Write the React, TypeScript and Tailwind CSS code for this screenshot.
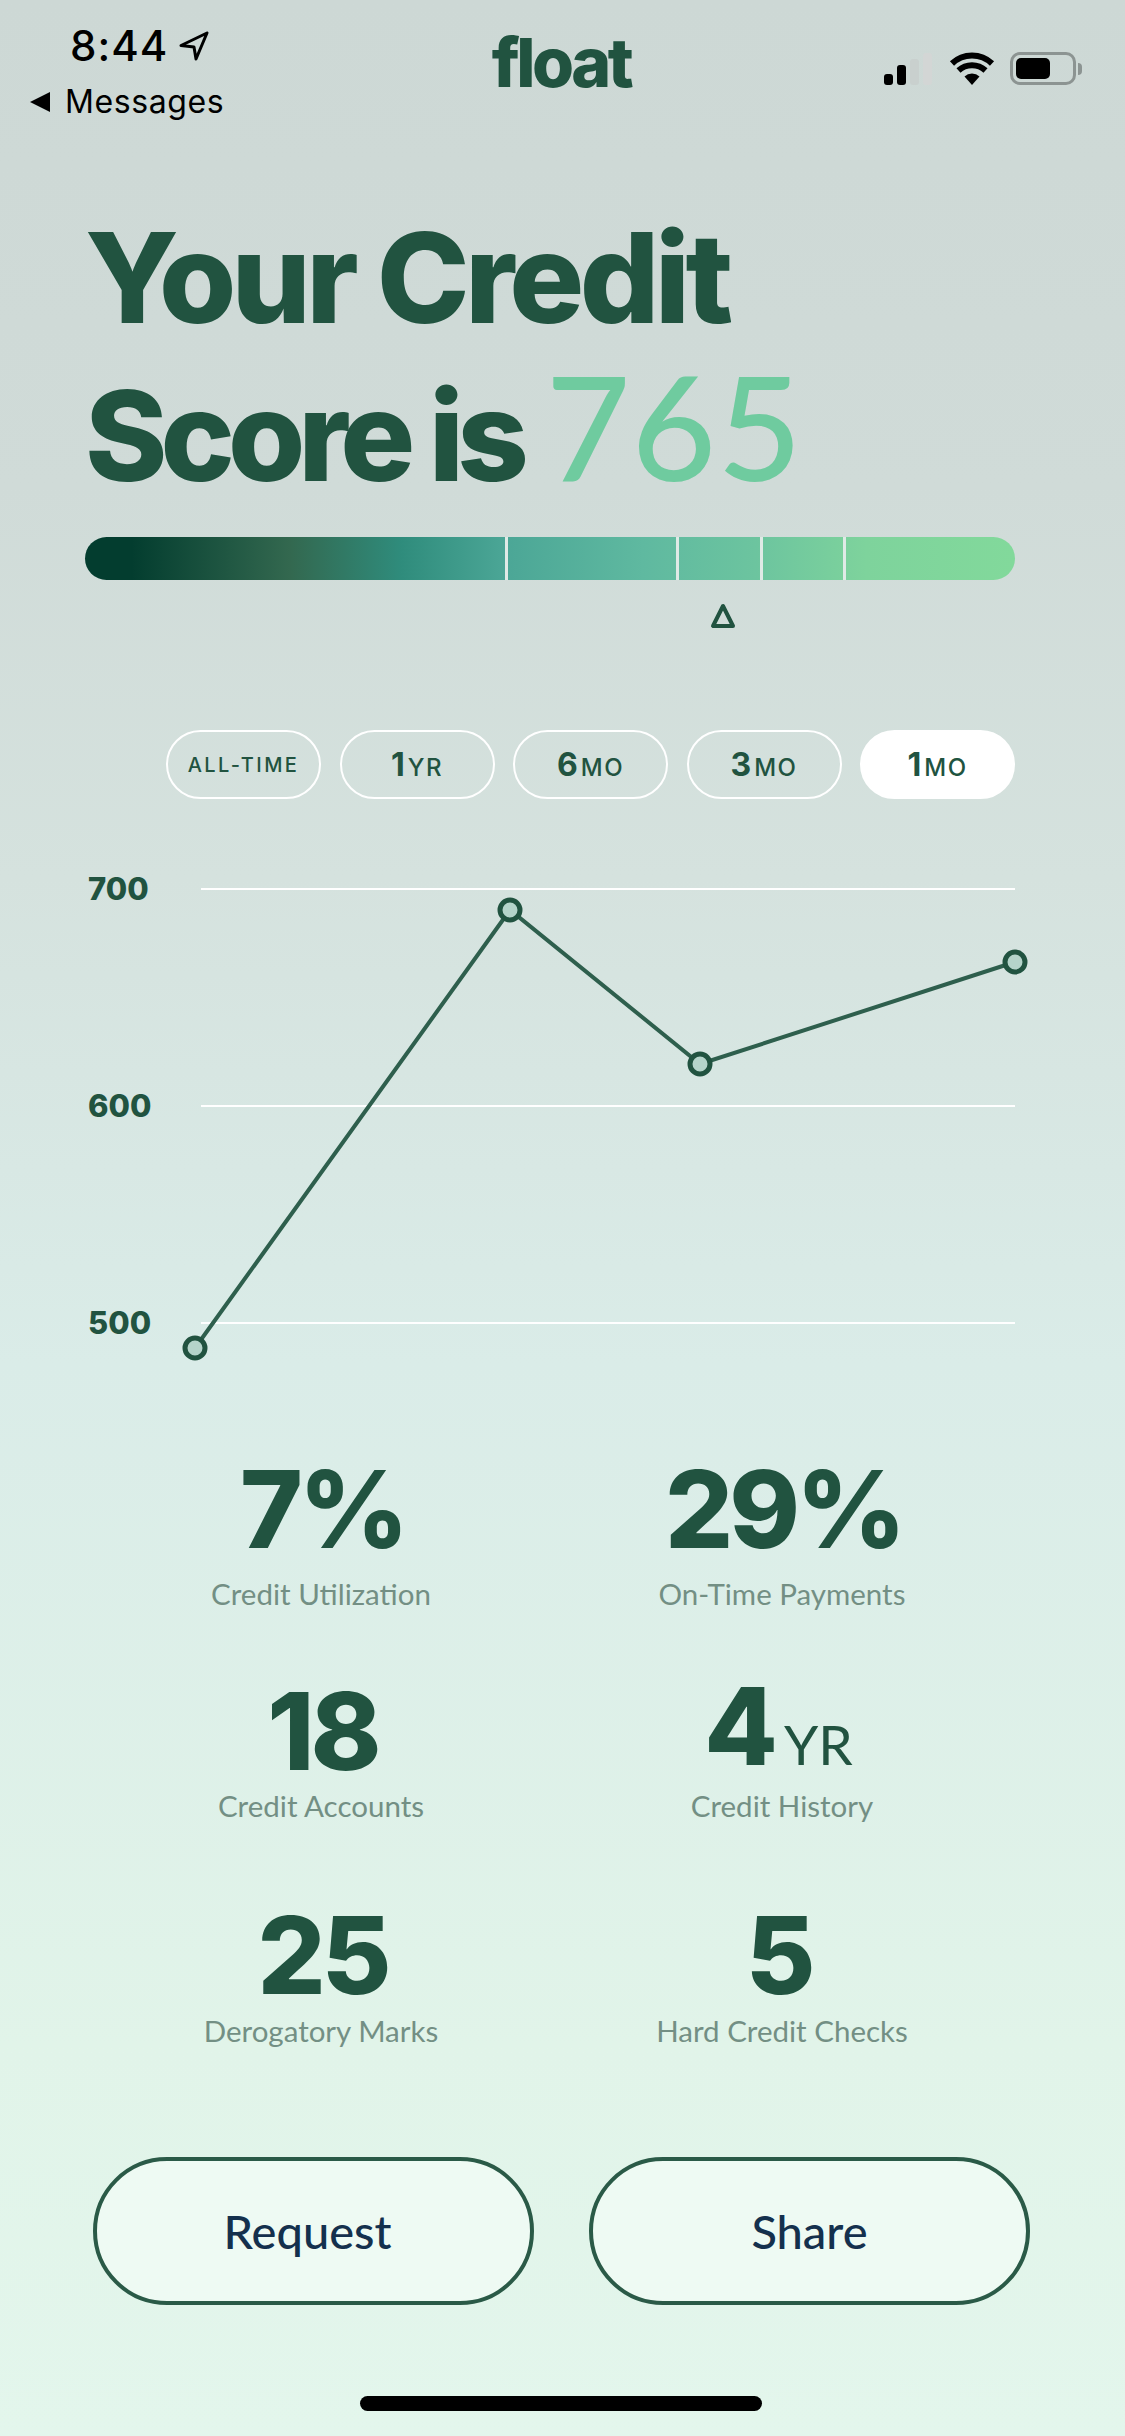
const pills = [
  { big: '', small: 'ALL-TIME' },
  { big: '1', small: 'YR' },
  { big: '6', small: 'MO' },
  { big: '3', small: 'MO' },
  { big: '1', small: 'MO', active: true },
]

// the rows in the picture are not evenly spaced, so each stat keeps its own nudges
const stats = [
  { value: '7%', label: 'Credit Utilization', numberClass: 'mt-0', labelClass: 'mt-[15px]' },
  { value: '29%', label: 'On-Time Payments', numberClass: 'mt-0', labelClass: 'mt-[15px]' },
  { value: '18', label: 'Credit Accounts', numberClass: 'mt-0', labelClass: 'mt-[5px]' },
  { value: '4', unit: 'YR', label: 'Credit History', numberClass: 'mt-[-5px] pr-[10px]', labelClass: 'mt-[10px]' },
  { value: '25', label: 'Derogatory Marks', numberClass: 'mt-[2px]', labelClass: 'mt-[6px]' },
  { value: '5', label: 'Hard Credit Checks', numberClass: 'mt-[2px] pr-[10px]', labelClass: 'mt-[6px]' },
]

const points = [
  [110, 479],
  [425, 41],
  [615, 195],
  [930, 93],
]

function StatusBar() {
  return (
    <header className="grid grid-cols-3 h-[200px] font-['Inter',sans-serif] text-black">
      <div className="pl-[29px] pt-[20px]">
        <div className="flex items-center h-[52px] pl-[41px] gap-[10px]">
          <span className="text-[42px] leading-none font-medium tracking-[1px]">8:44</span>
          <svg width="32" height="32" viewBox="0 0 32 32" fill="none" stroke="#000" strokeWidth="3" strokeLinejoin="round">
            <path d="M29 3 3 15.5l13 1.5 2 12z" />
          </svg>
        </div>
        <div className="flex items-center h-[40px] mt-[10px] gap-[14px]">
          <svg width="22" height="22" viewBox="0 0 22 22" fill="#000">
            <path d="M21 1v20L1 11z" />
          </svg>
          <span className="text-[32px] leading-none tracking-[0.6px]">Messages</span>
        </div>
      </div>
      <div className="flex justify-center pt-[24px] pr-[3px]">
        <span className="text-[68px] leading-[76px] font-extrabold tracking-[-3.5px] text-[#215340]">float</span>
      </div>
      <div className="flex items-start justify-end pt-[52px] pr-[43px]">
        <svg width="50" height="33" viewBox="0 0 50 33" className="mr-[17px]">
          <rect x="2" y="22" width="9" height="11" rx="3" fill="#000" />
          <rect x="15" y="13" width="9" height="20" rx="3" fill="#000" />
          <rect x="28" y="7" width="9" height="26" rx="3" fill="#c9d0ce" />
          <rect x="41" y="1" width="9" height="32" rx="3" fill="#d3d6d5" />
        </svg>
        <svg width="46" height="33" viewBox="0 0 46 33" className="mr-[15px]">
          <path d="M23 33 15.5 24.5a11 11 0 0 1 15 0z" fill="#000" />
          <path d="M9.5 18.5a20 20 0 0 1 27 0" fill="none" stroke="#000" strokeWidth="6" />
          <path d="M3 11.5a29 29 0 0 1 40 0" fill="none" stroke="#000" strokeWidth="6" />
        </svg>
        <div className="flex items-center">
          <div className="w-[66px] h-[33px] rounded-[10px] border-[3px] border-[#8c9492] p-[3px]">
            <div className="w-[34px] h-full rounded-[5px] bg-black" />
          </div>
          <div className="w-[4px] h-[12px] ml-[2px] rounded-r-full bg-[#8c9492]" />
        </div>
      </div>
    </header>
  )
}

function ScoreBar() {
  return (
    <div className="relative mt-[35px] h-[43px] rounded-full overflow-hidden bg-[linear-gradient(90deg,#033d2f_5%,#33684f_22%,#2f8c7c_34%,#4ba696_45%,#5fb9a0_60%,#6cc49f_72%,#7ed39c_84%,#82d99b_100%)]">
      <div className="absolute top-0 bottom-0 left-[420px] w-[3px] bg-[#dfeae6]" />
      <div className="absolute top-0 bottom-0 left-[591px] w-[3px] bg-[#dfeae6]" />
      <div className="absolute top-0 bottom-0 left-[675px] w-[3px] bg-[#dfeae6]" />
      <div className="absolute top-0 bottom-0 left-[758px] w-[3px] bg-[#dfeae6]" />
    </div>
  )
}

function Chart() {
  return (
    <div className="relative mt-[70px] flex flex-col gap-[177px]">
      {['700', '600', '500'].map((label) => (
        <div key={label} className="flex items-center h-[40px]">
          <span className="w-[116px] pl-[3px] text-[31px] font-extrabold text-[#215340]">{label}</span>
          <div className="flex-1 h-[2px] bg-white" />
        </div>
      ))}
      <svg className="absolute left-0 top-0 overflow-visible" width="930" height="480" viewBox="0 0 930 480" fill="none">
        <polyline points={points.map((p) => p.join(',')).join(' ')} stroke="#2e5f4d" strokeWidth="4" />
        {points.map(([x, y]) => (
          <circle key={x} cx={x} cy={y} r="10" fill="#b5d4ca" stroke="#215340" strokeWidth="5" />
        ))}
      </svg>
    </div>
  )
}

export default function App() {
  return (
    <div className="flex flex-col w-[1125px] h-[2436px] overflow-hidden font-['Inter',sans-serif] bg-[linear-gradient(180deg,#cdd8d5_0%,#d0dbd8_20%,#d5e2de_36%,#daece8_56%,#e1f4e9_84%,#e3f6ec_100%)]">
      <StatusBar />
      <main className="flex flex-col px-[85px] pr-[110px]">
        <h1 className="text-[125px] leading-[155px] font-extrabold text-[#215340] whitespace-nowrap">
          <span className="block h-[155px] tracking-[-4.7px]">Your Credit</span>
          <span className="flex items-baseline h-[155px] -mt-[8px]">
            <span className="tracking-[-7px]">Score is</span>
            <span className="ml-[24px] text-[146px] font-medium font-['Lato',sans-serif] tracking-[1px] text-[#6fcb9f]">765</span>
          </span>
        </h1>
        <ScoreBar />
        <div className="flex justify-start pl-[625px] mt-[23px] h-[26px]">
          <svg width="26" height="26" viewBox="0 0 26 26" fill="none" stroke="#215340" strokeWidth="4" strokeLinejoin="round">
            <path d="M13 3 3 23h20z" />
          </svg>
        </div>
        <div className="flex justify-between mt-[101px] pl-[81px]">
          {pills.map((pill, i) => (
            <button
              key={i}
              className={`flex items-baseline justify-center w-[155px] h-[69px] pt-[18px] rounded-full border-2 border-white text-[#215340] ${pill.active ? 'bg-white' : ''}`}
            >
              {pill.big && <span className="text-[32px] leading-[30px] font-bold">{pill.big}</span>}
              <span className={`${pill.big ? 'text-[24px] ml-[3px] tracking-[1.5px]' : 'text-[20px] tracking-[2.4px]'} leading-[30px] font-medium`}>
                {pill.small}
              </span>
            </button>
          ))}
        </div>
        <Chart />
      </main>
      <section className="grid grid-cols-[461px_461px] auto-rows-[222px] mt-[116px] ml-[92px]">
        {stats.map((stat) => (
          <div key={stat.label} className="flex flex-col items-center">
            <div className={`flex items-baseline h-[100px] text-[#215340] ${stat.numberClass}`}>
              <span className="text-[107px] leading-[100px] font-extrabold tracking-[-4px]">{stat.value}</span>
              {stat.unit && <span className="ml-[10px] text-[55px] leading-[100px] font-normal font-['Lato',sans-serif]">{stat.unit}</span>}
            </div>
            <div className={`pr-[3px] text-[29.5px] leading-[40px] font-['Lato',sans-serif] text-[#738f84] ${stat.labelClass}`}>{stat.label}</div>
          </div>
        ))}
      </section>
      <div className="flex gap-[55px] mt-[32px] ml-[93px]">
        <button className="w-[441px] h-[148px] pr-[12px] rounded-full border-4 border-[#2a5a47] bg-[#eefaf3] text-[47px] font-medium font-['Lato',sans-serif] text-[#14304d]">
          Request
        </button>
        <button className="w-[441px] h-[148px] rounded-full border-4 border-[#2a5a47] bg-[#eefaf3] text-[47px] font-medium font-['Lato',sans-serif] text-[#14304d]">
          Share
        </button>
      </div>
      <div className="self-center w-[402px] h-[15px] mt-[91px] mr-[3px] rounded-full bg-black" />
    </div>
  )
}
